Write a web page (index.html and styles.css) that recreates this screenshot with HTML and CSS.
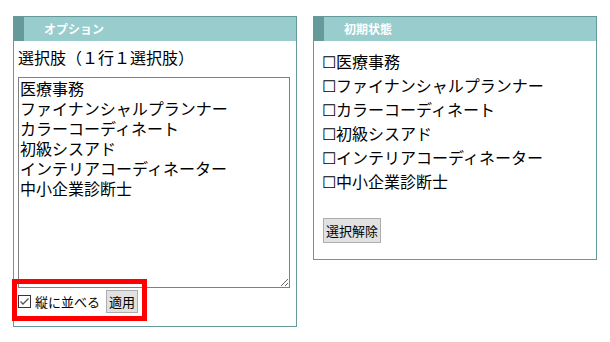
FILE: index.html
```html
<!DOCTYPE html>
<html lang="ja">
<head>
    <meta charset="UTF-8">
    <meta name="viewport" content="width=device-width, initial-scale=1.0">
    <title>オプション</title>
    <link rel="stylesheet" href="styles.css">
</head>
<body>
    <div class="wrap">
        <div class="panel panel-left">
            <div class="panel-head">オプション</div>
            <div class="title">選択肢（１行１選択肢）</div>
            <textarea class="choices">医療事務
ファイナンシャルプランナー
カラーコーディネート
初級シスアド
インテリアコーディネーター
中小企業診断士</textarea>
            <div class="opts">
                <label class="check">
                    <svg width="13" height="13" viewBox="0 0 13 13">
                        <rect x="0.5" y="0.5" width="12" height="12" fill="#fff" stroke="#333"/>
                        <path d="M2.5 6.5 L5 9 L10.5 3.5" fill="none" stroke="#555" stroke-width="1.3"/>
                    </svg>
                    <span>縦に並べる</span>
                </label>
                <button class="btn">適用</button>
            </div>
        </div>

        <div class="panel panel-right">
            <div class="panel-head">初期状態</div>
            <ul class="items">
                <li>☐医療事務</li>
                <li>☐ファイナンシャルプランナー</li>
                <li>☐カラーコーディネート</li>
                <li>☐初級シスアド</li>
                <li>☐インテリアコーディネーター</li>
                <li>☐中小企業診断士</li>
            </ul>
            <button class="btn btn-clear">選択解除</button>
        </div>
    </div>

    <!-- annotation -->
    <div class="mark"></div>
</body>
</html>
```

FILE: styles.css
```css
body {
    margin: 0;
    background: #fff;
    color: #000;
    font-family: "Noto Sans CJK JP", "Noto Sans", sans-serif;
}
.wrap {
    display: flex;
    align-items: flex-start;
    gap: 16px;
    padding: 16px 0 0 13px;
}
.panel {
    width: 284px;
    box-sizing: border-box;
    border: 1px solid #669999;
}
.panel-head {
    height: 24px;
    line-height: 24px;
    background: #99cccc;
    border-left: 10px solid #669999;
    padding-left: 20px;
    color: #fff;
    font-size: 12px;
    font-weight: bold;
}
.panel-left {
    height: 311px;
    padding: 0 6px 0 4px;
}
.panel-left .panel-head {
    margin: 0 -6px 0 -4px;
}
.title {
    font-size: 16px;
    line-height: 20px;
    padding-top: 6px;
    margin-bottom: 10px;
}
.choices {
    display: block;
    box-sizing: border-box;
    width: 272px;
    height: 211px;
    margin: 0;
    padding: 0 1px;
    border: 1px solid #808080;
    font-family: "Noto Sans CJK JP", sans-serif;
    font-size: 16px;
    line-height: 20px;
    color: #000;
    outline: none;
}
.opts {
    display: flex;
    align-items: center;
    margin-top: 2px;
}
.check {
    display: flex;
    align-items: center;
    gap: 4px;
    font-size: 13px;
    line-height: 20px;
}
.check svg {
    display: block;
}
.btn {
    margin: 0 0 0 6px;
    padding: 1px 2px;
    border: 1px solid #adadad;
    background: #e1e1e1;
    color: #000;
    font-family: "Noto Sans CJK JP", sans-serif;
    font-size: 13px;
    line-height: 19px;
    border-radius: 0;
}
.panel-right {
    height: 244px;
}
.items {
    list-style: none;
    margin: 0;
    padding: 8px 0 0 8px;
    font-size: 16px;
    line-height: 24px;
}
.btn-clear {
    margin: 25px 0 0 9px;
    padding: 2px 2px;
}
.mark {
    position: absolute;
    left: 12px;
    top: 279px;
    width: 135px;
    height: 42px;
    box-sizing: border-box;
    border: 5px solid #ff0000;
}
```
